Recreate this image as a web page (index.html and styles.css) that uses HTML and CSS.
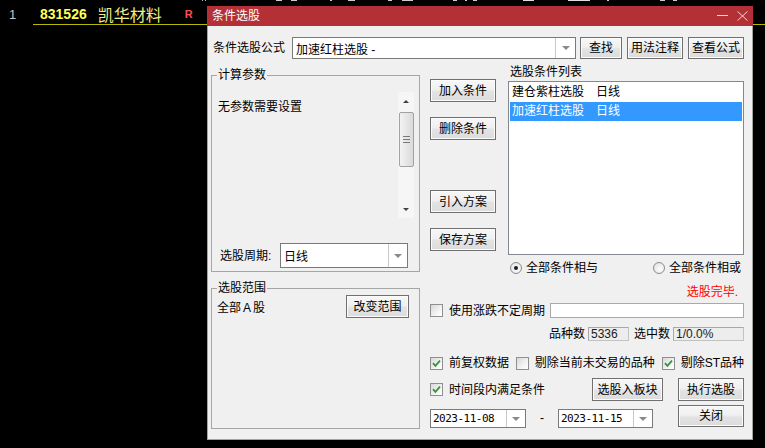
FILE: index.html
```html
<!DOCTYPE html>
<html lang="zh-CN">
<head>
<meta charset="utf-8">
<title>条件选股</title>
<link rel="stylesheet" href="styles.css">
</head>
<body>
<div class="ticks"></div>
<div class="quote">
  <span class="q-idx">1</span>
  <div class="q-line">
    <span class="q-code">831526</span>
    <span class="q-name">凯华材料</span>
    <span class="q-flag">R</span>
  </div>
</div>

<div class="dialog">
  <div class="titlebar">
    <span class="title">条件选股</span>
    <span class="win-ctrls">
      <svg class="ic" width="11" height="10" viewBox="0 0 11 10"><path d="M0 4.5H11" stroke="#f4d6d7" stroke-width="1"/></svg>
      <svg class="ic" width="11" height="10" viewBox="0 0 11 10"><path d="M0.5 0.5L10.5 9.5M10.5 0.5L0.5 9.5" stroke="#f4d6d7" stroke-width="1" fill="none"/></svg>
    </span>
  </div>
  <div class="dlg-body">
    <div class="formula-row">
      <span class="formula-lbl">条件选股公式</span>
      <div class="combo formula-combo">
        <span class="combo-val">加速红柱选股 -</span>
        <span class="combo-btn"><i class="tri"></i></span>
      </div>
      <button class="btn btn-find">查找</button>
      <button class="btn btn-usage">用法注释</button>
      <button class="btn btn-view">查看公式</button>
    </div>

    <div class="main">
      <div class="left-col">
        <div class="group params">
          <span class="legend">计算参数</span>
          <div class="params-top">
            <span class="params-text">无参数需要设置</span>
            <div class="vscroll">
              <span class="sb-arrow"><i class="tri-up"></i></span>
              <span class="sb-thumb"><span class="grip"></span></span>
              <span class="sb-fill"></span>
              <span class="sb-arrow"><i class="tri-down"></i></span>
            </div>
          </div>
          <div class="period-row">
            <span class="period-lbl">选股周期:</span>
            <div class="combo period-combo">
              <span class="combo-val">日线</span>
              <span class="combo-btn"><i class="tri"></i></span>
            </div>
          </div>
        </div>
        <div class="group scope">
          <span class="legend">选股范围</span>
          <div class="scope-row">
            <span class="scope-text">全部<span class="wide-a">A</span>股</span>
            <button class="btn btn-scope">改变范围</button>
          </div>
        </div>
      </div>

      <div class="right-col">
        <div class="cond-area">
          <div class="cond-btns">
            <button class="btn cb">加入条件</button>
            <button class="btn cb cb-del">删除条件</button>
            <button class="btn cb cb-import">引入方案</button>
            <button class="btn cb cb-save">保存方案</button>
          </div>
          <div class="cond-list-col">
            <div class="list-title">选股条件列表</div>
            <ul class="cond-list">
              <li>建仓紫柱选股　日线</li>
              <li class="selected">加速红柱选股　日线</li>
            </ul>
          </div>
        </div>

        <div class="radio-row">
          <span class="radio-item"><span class="radio checked"></span>全部条件相与</span>
          <span class="radio-item"><span class="radio"></span>全部条件相或</span>
        </div>

        <div class="status">选股完毕.</div>

        <div class="uncertain-row">
          <span class="chk-item"><span class="chk"></span>使用涨跌不定周期</span>
          <div class="text-input"></div>
        </div>

        <div class="count-row">
          <span>品种数</span><span class="ro-field f-total">5336</span>
          <span class="lbl-sel">选中数</span><span class="ro-field f-sel">1/0.0%</span>
        </div>

        <div class="opt-row">
          <span class="chk-item"><span class="chk"><svg width="11" height="11" viewBox="0 0 11 11"><path d="M2 5.2L4.4 7.8L9 2.6" fill="none" stroke="#2e9b32" stroke-width="1.8"/></svg></span>前复权数据</span>
          <span class="chk-item"><span class="chk"></span>剔除当前未交易的品种</span>
          <span class="chk-item"><span class="chk"><svg width="11" height="11" viewBox="0 0 11 11"><path d="M2 5.2L4.4 7.8L9 2.6" fill="none" stroke="#2e9b32" stroke-width="1.8"/></svg></span>剔除ST品种</span>
        </div>

        <div class="time-row">
          <span class="chk-item"><span class="chk"><svg width="11" height="11" viewBox="0 0 11 11"><path d="M2 5.2L4.4 7.8L9 2.6" fill="none" stroke="#2e9b32" stroke-width="1.8"/></svg></span>时间段内满足条件</span>
          <button class="btn btn-block">选股入板块</button>
          <button class="btn btn-run">执行选股</button>
        </div>

        <div class="date-row">
          <div class="combo date-combo">
            <span class="combo-val date-val">2023-11-08</span>
            <span class="combo-btn"><i class="tri"></i></span>
          </div>
          <span class="dash">-</span>
          <div class="combo date-combo date-combo2">
            <span class="combo-val date-val">2023-11-15</span>
            <span class="combo-btn"><i class="tri"></i></span>
          </div>
          <button class="btn btn-close">关闭</button>
        </div>
      </div>
    </div>
  </div>
</div>
</body>
</html>
```

FILE: styles.css
```css
* {
  box-sizing: border-box;
  margin: 0;
  padding: 0;
}

html, body {
  width: 765px;
  height: 448px;
  overflow: hidden;
}

body {
  background: #000;
  position: relative;
  font-family: "Liberation Sans", "Noto Sans CJK SC", sans-serif;
  font-size: 12px;
  color: #000;
}

/* clipped header marks at very top */
.ticks {
  height: 1px;
  background: linear-gradient(to right,
    transparent 202px, #bbb 202px, #bbb 203px, transparent 203px,
    transparent 205px, #bbb 205px, #bbb 206px, transparent 206px,
    transparent 276px, #ccc 276px, #ccc 282px, transparent 282px,
    transparent 291px, #ccc 291px, #ccc 297px, transparent 297px,
    transparent 330px, #ccc 330px, #ccc 332px, transparent 332px,
    transparent 348px, #ccc 348px, #ccc 355px, transparent 355px,
    transparent 388px, #ccc 388px, #ccc 392px, transparent 392px,
    transparent 402px, #ccc 402px, #ccc 413px, transparent 413px,
    transparent 453px, #ccc 453px, #ccc 457px, transparent 457px,
    transparent 465px, #ccc 465px, #ccc 467px, transparent 467px,
    transparent 473px, #ccc 473px, #ccc 477px, transparent 477px,
    transparent 523px, #ddd 523px, #ddd 534px, transparent 534px,
    transparent 568px, #ddd 568px, #ddd 590px, transparent 590px,
    transparent 607px, #ccc 607px, #ccc 609px, transparent 609px,
    transparent 660px, #ccc 660px, #ccc 665px, transparent 665px,
    transparent 673px, #ccc 673px, #ccc 677px, transparent 677px);
}

/* stock list row behind dialog */
.quote {
  display: flex;
  height: 24px;
}

.q-idx {
  width: 33px;
  padding-left: 9px;
  padding-top: 3px;
  display: flex;
  align-items: center;
  color: #c8c8c8;
  font-size: 13px;
}

.q-line {
  flex: 1;
  display: flex;
  align-items: center;
  padding-left: 7px;
  padding-top: 3px;
  border-bottom: 1px solid #b8b800;
}

.q-code {
  font-weight: bold;
  font-size: 14px;
  color: #ffff55;
}

.q-name {
  margin-left: 11px;
  font-family: "Noto Sans CJK SC", sans-serif;
  font-size: 16px;
  line-height: 18px;
  color: #eeee88;
}

.q-flag {
  margin-left: 23px;
  font-weight: bold;
  font-size: 11px;
  color: #ff4f4f;
}

/* dialog window */
.dialog {
  position: absolute;
  left: 207px;
  top: 6px;
  width: 546px;
  height: 434px;
  display: flex;
  flex-direction: column;
}

.titlebar {
  height: 20px;
  background: #b33037;
  display: flex;
  align-items: center;
  padding: 0 5px;
  color: #fff;
}

.title {
  line-height: 14px;
}

.win-ctrls {
  margin-left: auto;
  display: flex;
  align-items: center;
  gap: 9px;
}

.ic {
  display: block;
}

.dlg-body {
  flex: 1;
  background: #f0f0f0;
  border: 1px solid #a4a4a4;
  border-top: none;
  padding: 11px 8px 0 3px;
}

/* common controls */
.btn {
  font-family: inherit;
  font-size: 12px;
  color: #000;
  border: 1px solid #707070;
  box-shadow: inset 0 0 0 1px #fbfbfb;
  background: linear-gradient(#f7f7f7, #f0f0f0 45%, #e3e3e3 55%, #dcdcdc);
  height: 23px;
  display: flex;
  align-items: center;
  justify-content: center;
  line-height: 14px;
}

.combo {
  display: flex;
  background: #fff;
  border: 1px solid #7a7a7a;
}

.combo-val {
  flex: 1;
  padding-left: 3px;
  display: flex;
  align-items: center;
  white-space: pre;
}

.combo-btn {
  width: 20px;
  border-left: 1px solid #c9c9c9;
  display: flex;
  align-items: center;
  justify-content: center;
}

.tri {
  display: block;
  width: 0;
  height: 0;
  border-left: 4px solid transparent;
  border-right: 4px solid transparent;
  border-top: 4px solid #8a8a8a;
}

/* formula row */
.formula-row {
  display: flex;
  align-items: center;
  height: 22px;
}

.formula-lbl {
  margin-left: 2px;
  width: 79px;
  line-height: 14px;
}

.formula-combo {
  width: 284px;
  height: 22px;
}

.btn-find {
  margin-left: 4px;
  width: 42px;
  height: 22px;
}

.btn-usage,
.btn-view {
  margin-left: 5px;
  width: 56px;
  height: 22px;
}

/* main */
.main {
  display: flex;
  margin-top: 5px;
}

.left-col {
  width: 209px;
  padding-top: 11px;
  display: flex;
  flex-direction: column;
  gap: 16px;
}

.group {
  position: relative;
  border: 1px solid #a6a6a6;
}

.legend {
  position: absolute;
  top: -8px;
  left: 5px;
  padding: 0 1px;
  background: #f0f0f0;
  line-height: 14px;
}

.params {
  height: 197px;
  display: flex;
  flex-direction: column;
  justify-content: space-between;
}

.params-top {
  display: flex;
  justify-content: space-between;
  padding: 16px 5px 0 6px;
}

.params-text {
  margin-top: 8px;
  line-height: 14px;
}

.vscroll {
  width: 16px;
  height: 126px;
  display: flex;
  flex-direction: column;
  align-items: center;
  background: #f6f6f6;
}

.sb-arrow {
  height: 18px;
  width: 16px;
  display: flex;
  align-items: center;
  justify-content: center;
}

.tri-up {
  display: block;
  width: 0;
  height: 0;
  border-left: 3px solid transparent;
  border-right: 3px solid transparent;
  border-bottom: 3px solid #404040;
}

.tri-down {
  display: block;
  width: 0;
  height: 0;
  border-left: 3px solid transparent;
  border-right: 3px solid transparent;
  border-top: 3px solid #404040;
}

.sb-thumb {
  margin-top: 2px;
  width: 15px;
  height: 55px;
  border: 1px solid #a2a2a2;
  border-radius: 2px;
  background: linear-gradient(to right, #f3f3f3, #e6e6e6 50%, #dadada);
  display: flex;
  align-items: center;
  justify-content: center;
}

.grip {
  width: 7px;
  height: 7px;
  background: repeating-linear-gradient(#7a7a7a 0 1px, transparent 1px 3px);
}

.sb-fill {
  flex: 1;
}

.period-row {
  display: flex;
  align-items: center;
  padding: 0 10px 3px 8px;
}

.period-lbl {
  width: 60px;
  line-height: 14px;
}

.period-combo {
  width: 128px;
  height: 25px;
}

.period-combo .combo-btn {
  width: 19px;
}

.scope {
  height: 141px;
}

.scope-row {
  display: flex;
  align-items: center;
  justify-content: space-between;
  padding: 6px 10px 0 5px;
}

.scope-text {
  line-height: 14px;
  margin-top: 2px;
}

.wide-a {
  margin: 0 2px;
}

.btn-scope {
  width: 63px;
  height: 23px;
}

/* right column */
.right-col {
  margin-left: 10px;
  width: 314px;
  display: flex;
  flex-direction: column;
}

.cond-area {
  display: flex;
  gap: 12px;
}

.cond-btns {
  width: 66px;
  padding-top: 15px;
  display: flex;
  flex-direction: column;
}

.cb {
  width: 66px;
  height: 23px;
}

.cb-del,
.cb-save {
  margin-top: 15px;
}

.cb-import {
  margin-top: 50px;
}

.cond-list-col {
  width: 236px;
}

.list-title {
  line-height: 17px;
  padding-left: 2px;
}

.cond-list {
  list-style: none;
  height: 174px;
  background: #fff;
  border: 1px solid #828790;
  padding: 1px;
}

.cond-list li {
  height: 19px;
  line-height: 19px;
  padding-left: 2px;
}

.cond-list .selected {
  background: #3399ff;
  color: #fff;
}

.radio-row {
  margin-top: 6px;
  height: 14px;
  display: flex;
  justify-content: space-between;
  padding: 0 3px 0 80px;
}

.radio-item {
  display: flex;
  align-items: center;
  gap: 4px;
  line-height: 14px;
}

.radio {
  width: 12px;
  height: 12px;
  border-radius: 50%;
  border: 1px solid #8b8b8b;
  background: radial-gradient(circle at 60% 60%, #fdfdfd, #dedede);
  display: flex;
  align-items: center;
  justify-content: center;
}

.radio.checked::after {
  content: "";
  width: 4px;
  height: 4px;
  border-radius: 50%;
  background: #1a1a1a;
}

.status {
  margin-top: 10px;
  line-height: 14px;
  text-align: right;
  padding-right: 6px;
  color: #ff0000;
}

.uncertain-row {
  margin-top: 4px;
  height: 15px;
  display: flex;
  align-items: center;
  justify-content: space-between;
}

.chk-item {
  display: flex;
  align-items: center;
  gap: 6px;
  line-height: 14px;
  white-space: nowrap;
}

.chk {
  width: 13px;
  height: 13px;
  border: 1px solid #8e8f8f;
  background: linear-gradient(135deg, #d8d8d8, #f7f7f7 70%, #fdfdfd);
  display: flex;
  align-items: center;
  justify-content: center;
}

.chk svg {
  display: block;
}

.text-input {
  width: 194px;
  height: 15px;
  background: #fff;
  border: 1px solid #a9a9a9;
}

.count-row {
  margin-top: 9px;
  height: 14px;
  display: flex;
  justify-content: flex-end;
  align-items: center;
  line-height: 14px;
}

.ro-field {
  height: 14px;
  line-height: 12px;
  padding-left: 2px;
  border: 1px solid #c2c2c2;
  border-top-color: #a8a8a8;
  border-left-color: #a8a8a8;
  background: #ededed;
  color: #1a1a1a;
}

.f-total {
  width: 41px;
  margin-left: 3px;
}

.lbl-sel {
  margin-left: 5px;
}

.f-sel {
  width: 71px;
  margin-left: 3px;
}

.opt-row {
  margin-top: 15px;
  height: 14px;
  display: flex;
  align-items: center;
  justify-content: space-between;
}

.time-row {
  margin-top: 8px;
  height: 23px;
  display: flex;
  align-items: center;
}

.btn-block {
  margin-left: auto;
  width: 71px;
}

.btn-run {
  margin-left: 15px;
  width: 66px;
}

.date-row {
  margin-top: 4px;
  display: flex;
  align-items: flex-start;
}

.date-combo {
  margin-top: 4px;
  width: 96px;
  height: 19px;
}

.date-combo2 {
  width: 95px;
}

.date-combo .combo-btn {
  width: 19px;
}

.date-val {
  font-family: "DejaVu Sans Mono", "Liberation Mono", monospace;
  font-size: 11px;
  letter-spacing: -0.5px;
  padding-left: 2px;
}

.dash {
  margin-top: 4px;
  width: 32px;
  line-height: 19px;
  text-align: center;
}

.btn-close {
  margin-left: auto;
  width: 66px;
  height: 22px;
}
```
